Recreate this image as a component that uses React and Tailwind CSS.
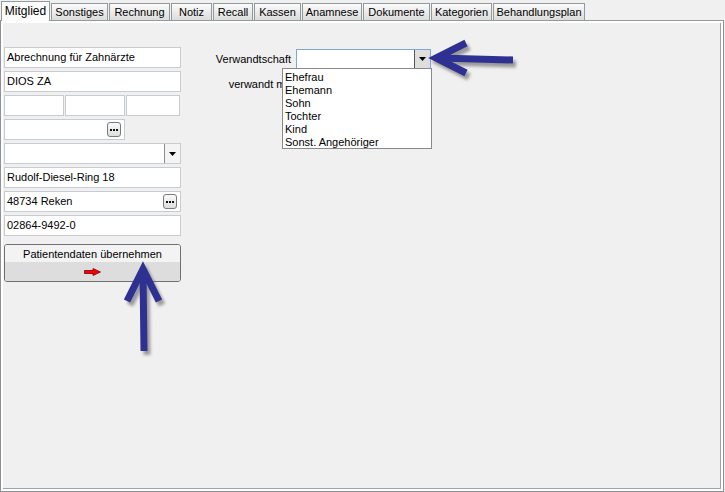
import React from "react";

const tabs = [
  { label: "Sonstiges", w: "w-[57px]" },
  { label: "Rechnung", w: "w-[61px]" },
  { label: "Notiz", w: "w-[41px]" },
  { label: "Recall", w: "w-[40px]" },
  { label: "Kassen", w: "w-[47px]" },
  { label: "Anamnese", w: "w-[60px]" },
  { label: "Dokumente", w: "w-[67px]" },
  { label: "Kategorien", w: "w-[61px]" },
  { label: "Behandlungsplan", w: "w-[92px]" },
];

function Dots() {
  return (
    <div className="w-[14px] h-[15px] rounded-[3px] border border-[#7a7a7a] bg-linear-to-b from-[#fafafa] to-[#dedede] flex items-center justify-center gap-[1px] pt-[1px]">
      <div className="w-[2px] h-[2px] bg-[#111]" />
      <div className="w-[2px] h-[2px] bg-[#111]" />
      <div className="w-[2px] h-[2px] bg-[#111]" />
    </div>
  );
}

function Field({ text, className = "w-[177px]", children }) {
  return (
    <div
      className={`${className} h-[21px] border border-[#c7ccd3] bg-white flex items-center justify-between pl-[2px] text-[11px] leading-none`}
    >
      <span className="whitespace-nowrap">{text}</span>
      {children}
    </div>
  );
}

function Caret() {
  return (
    <svg width="7" height="4" viewBox="0 0 7 4">
      <polygon points="0,0 7,0 3.5,4" fill="#000" />
    </svg>
  );
}

function BlueArrows() {
  return (
    <svg
      className="absolute left-0 top-0 pointer-events-none"
      width="725"
      height="492"
      viewBox="0 0 725 492"
    >
      <defs>
        <filter id="blur" x="-20%" y="-20%" width="140%" height="140%">
          <feGaussianBlur stdDeviation="1.6" />
        </filter>
      </defs>
      <g transform="translate(3,4)" opacity="0.55" filter="url(#blur)" stroke="#555" fill="none" strokeWidth="7">
        <polyline points="466,43 436,58 466,73" strokeLinejoin="miter" strokeMiterlimit="10" />
        <line x1="440" y1="58" x2="513" y2="60" />
        <polyline points="127,301 143,269 159,301" strokeLinejoin="miter" strokeMiterlimit="10" />
        <line x1="143" y1="273" x2="144" y2="351" />
      </g>
      <g stroke="#2e3192" fill="none" strokeWidth="7">
        <polyline points="466,43 436,58 466,73" strokeLinejoin="miter" strokeMiterlimit="10" />
        <line x1="440" y1="58" x2="513" y2="60" />
        <polyline points="127,301 143,269 159,301" strokeLinejoin="miter" strokeMiterlimit="10" />
        <line x1="143" y1="273" x2="144" y2="351" />
      </g>
    </svg>
  );
}

export default function App() {
  return (
    <div className="relative w-[725px] h-[492px] bg-[#f0f0f0] flex flex-col overflow-hidden font-['Liberation_Sans',Arial,sans-serif] text-black">
      {/* tab strip */}
      <div className="h-[20px] flex items-end gap-[1px] shrink-0">
        <div className="relative z-10 ml-[1px] w-[49px] h-[20px] mb-[-1px] bg-[#fcfcfc] border-l border-t border-r border-[#919b9c] flex items-center justify-center text-[12px] leading-none pb-[1px]">
          Mitglied
        </div>
        {tabs.map((t) => (
          <div
            key={t.label}
            className={`${t.w} h-[17px] border-l border-t border-r border-[#919b9c] bg-linear-to-b from-[#fbfbfb] to-[#dcdcdc] flex items-center justify-center text-[11px] leading-none whitespace-nowrap`}
          >
            {t.label}
          </div>
        ))}
      </div>

      {/* panel */}
      <div className="flex-1 mr-[1px] border border-[#8d8f99] border-t-[#919b9c] flex">
        <div className="flex-1 border-2 border-white flex">
          <div className="flex-1 border-r border-b border-[#a0a0a0] flex">
            {/* left column */}
            <div className="ml-[1px] pt-[24px] w-[177px] flex flex-col gap-[3px]">
              <Field text="Abrechnung für Zahnärzte" />
              <Field text="DIOS ZA" />
              <div className="flex gap-[1px]">
                <Field text="" className="w-[60px]" />
                <Field text="" className="w-[60px]" />
                <Field text="" className="w-[54px]" />
              </div>
              <Field text="" className="w-[121px] pr-[3px]">
                <Dots />
              </Field>
              <div className="w-[177px] h-[21px] border border-[#c7ccd3] bg-white flex justify-end">
                <div className="w-[16px] h-full border-l border-[#8c8c8c] bg-[#f4f4f4] flex items-center justify-center">
                  <Caret />
                </div>
              </div>
              <Field text="Rudolf-Diesel-Ring 18" />
              <Field text="48734 Reken" className="w-[177px] pr-[3px]">
                <Dots />
              </Field>
              <Field text="02864-9492-0" />

              <div className="mt-[5px] w-[177px] h-[38px] border border-[#707070] rounded-[3px] flex flex-col overflow-hidden">
                <div className="h-[17px] bg-[#f3f3f3] flex items-center justify-center text-[11px] leading-none pt-[1px]">
                  Patientendaten übernehmen
                </div>
                <div className="flex-1 bg-[#dddddd] flex items-center justify-center">
                  <svg width="17" height="8" viewBox="0 0 17 8">
                    <polygon
                      points="0.5,2.5 9,2.5 9,0.5 16.5,4 9,7.5 9,5.5 0.5,5.5"
                      fill="#ff0000"
                      stroke="#7a0000"
                      strokeWidth="0.8"
                    />
                  </svg>
                </div>
              </div>
            </div>

            {/* right column */}
            <div className="ml-[34px] pt-[26px] flex flex-col gap-[5px]">
              <div className="flex items-center">
                <div className="w-[81px] pr-[5px] text-right text-[11px] leading-none whitespace-nowrap">
                  Verwandtschaft
                </div>
                <div className="relative w-[135px] h-[20px] border border-[#7ea6d6] bg-white flex justify-end">
                  <div className="w-[16px] h-full border-l border-[#555] bg-[#dedede] flex items-center justify-center">
                    <Caret />
                  </div>
                  <div className="absolute z-20 left-[-15px] top-[18px] w-[150px] h-[81px] border border-[#8a8a8a] bg-white pt-[2px] pl-[2px] text-[11px]">
                    {["Ehefrau", "Ehemann", "Sohn", "Tochter", "Kind", "Sonst. Angehöriger"].map((it) => (
                      <div key={it} className="h-[13px] leading-[13px] whitespace-nowrap">
                        {it}
                      </div>
                    ))}
                  </div>
                </div>
              </div>
              <div className="flex items-center">
                <div className="w-[81px] pr-[5px] text-right text-[11px] leading-none whitespace-nowrap">
                  verwandt mit
                </div>
                <div className="w-[135px] h-[20px] border border-[#c7ccd3] bg-white" />
              </div>
            </div>
          </div>
        </div>
      </div>

      <BlueArrows />
    </div>
  );
}
